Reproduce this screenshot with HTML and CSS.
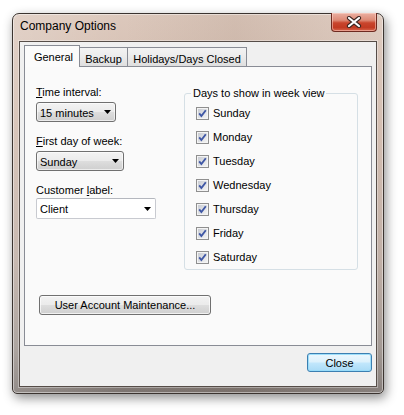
FILE: index.html
```html
<!DOCTYPE html>
<html>
<head>
<meta charset="utf-8">
<link rel="stylesheet" href="styles.css">
</head>
<body>
<div class="window">
  <div class="titlebar">
    <span class="title">Company Options</span>
    <div class="caption-close">
      <svg width="16" height="12" viewBox="0 0 16 12">
        <path d="M3 2 L13 10 M13 2 L3 10" stroke="#3b2520" stroke-width="4.2" stroke-linecap="round" fill="none"/>
        <path d="M3 2 L13 10 M13 2 L3 10" stroke="#ffffff" stroke-width="2.2" stroke-linecap="round" fill="none"/>
      </svg>
    </div>
  </div>
  <div class="client">
    <div class="tabs">
      <div class="tab tab-general active">General</div>
      <div class="tab tab-backup">Backup</div>
      <div class="tab tab-holidays">Holidays/Days Closed</div>
    </div>
    <div class="panel">
      <div class="panel-top">
        <div class="left-col">
          <div class="field-label first"><u>T</u>ime interval:</div>
          <div class="combo w80"><span>15 minutes</span><svg class="arrow" width="7" height="4" viewBox="0 0 7 4"><polygon points="0,0 7,0 3.5,4" fill="#000"/></svg></div>
          <div class="field-label"><u>F</u>irst day of week:</div>
          <div class="combo w88"><span>Sunday</span><svg class="arrow" width="7" height="4" viewBox="0 0 7 4"><polygon points="0,0 7,0 3.5,4" fill="#000"/></svg></div>
          <div class="field-label">Customer <u>l</u>abel:</div>
          <div class="combo edit w120"><span>Client</span><svg class="arrow" width="7" height="4" viewBox="0 0 7 4"><polygon points="0,0 7,0 3.5,4" fill="#000"/></svg></div>
        </div>
        <fieldset class="group">
          <legend>Days to show in week view</legend>
          <div class="day first"><svg class="check" width="13" height="13" viewBox="0 0 13 13"><rect x="0.5" y="0.5" width="12" height="12" fill="#f4f4f4" stroke="#8f8f8f"/><rect x="2" y="2" width="9" height="9" fill="url(#cb)"/><path d="M3.2 6.3 L5.4 9 L9.8 3.2" stroke="#3f57a5" stroke-width="1.9" fill="none"/><defs><linearGradient id="cb" x1="0" y1="0" x2="1" y2="1"><stop offset="0" stop-color="#c9ccd3"/><stop offset="1" stop-color="#f3f3f3"/></linearGradient></defs></svg><span>Sunday</span></div>
          <div class="day"><svg class="check" width="13" height="13" viewBox="0 0 13 13"><rect x="0.5" y="0.5" width="12" height="12" fill="#f4f4f4" stroke="#8f8f8f"/><rect x="2" y="2" width="9" height="9" fill="url(#cb)"/><path d="M3.2 6.3 L5.4 9 L9.8 3.2" stroke="#3f57a5" stroke-width="1.9" fill="none"/></svg><span>Monday</span></div>
          <div class="day"><svg class="check" width="13" height="13" viewBox="0 0 13 13"><rect x="0.5" y="0.5" width="12" height="12" fill="#f4f4f4" stroke="#8f8f8f"/><rect x="2" y="2" width="9" height="9" fill="url(#cb)"/><path d="M3.2 6.3 L5.4 9 L9.8 3.2" stroke="#3f57a5" stroke-width="1.9" fill="none"/></svg><span>Tuesday</span></div>
          <div class="day"><svg class="check" width="13" height="13" viewBox="0 0 13 13"><rect x="0.5" y="0.5" width="12" height="12" fill="#f4f4f4" stroke="#8f8f8f"/><rect x="2" y="2" width="9" height="9" fill="url(#cb)"/><path d="M3.2 6.3 L5.4 9 L9.8 3.2" stroke="#3f57a5" stroke-width="1.9" fill="none"/></svg><span>Wednesday</span></div>
          <div class="day"><svg class="check" width="13" height="13" viewBox="0 0 13 13"><rect x="0.5" y="0.5" width="12" height="12" fill="#f4f4f4" stroke="#8f8f8f"/><rect x="2" y="2" width="9" height="9" fill="url(#cb)"/><path d="M3.2 6.3 L5.4 9 L9.8 3.2" stroke="#3f57a5" stroke-width="1.9" fill="none"/></svg><span>Thursday</span></div>
          <div class="day"><svg class="check" width="13" height="13" viewBox="0 0 13 13"><rect x="0.5" y="0.5" width="12" height="12" fill="#f4f4f4" stroke="#8f8f8f"/><rect x="2" y="2" width="9" height="9" fill="url(#cb)"/><path d="M3.2 6.3 L5.4 9 L9.8 3.2" stroke="#3f57a5" stroke-width="1.9" fill="none"/></svg><span>Friday</span></div>
          <div class="day"><svg class="check" width="13" height="13" viewBox="0 0 13 13"><rect x="0.5" y="0.5" width="12" height="12" fill="#f4f4f4" stroke="#8f8f8f"/><rect x="2" y="2" width="9" height="9" fill="url(#cb)"/><path d="M3.2 6.3 L5.4 9 L9.8 3.2" stroke="#3f57a5" stroke-width="1.9" fill="none"/></svg><span>Saturday</span></div>
        </fieldset>
      </div>
      <button class="btn uam">User Account Maintenance...</button>
    </div>
    <div class="footer">
      <button class="btn default close">Close</button>
    </div>
  </div>
</div>
</body>
</html>
```
FILE: styles.css
```css
* { box-sizing: border-box; }
html, body { margin: 0; padding: 0; background: #ffffff; }
body {
  width: 404px;
  height: 415px;
  overflow: hidden;
  font-family: "Liberation Sans", Arial, sans-serif;
  font-size: 11px;
  color: #000;
}
.window {
  margin: 13px 0 0 12px;
  width: 372px;
  height: 381px;
  border: 1px solid #3b3430;
  border-radius: 7px 7px 5px 5px;
  padding: 0 6px 6px;
  display: flex;
  flex-direction: column;
  background:
    linear-gradient(90deg, rgba(255,255,255,0.18) 0%, rgba(255,255,255,0) 30%, rgba(90,60,40,0.08) 60%, rgba(255,255,255,0.08) 100%),
    linear-gradient(180deg, #dcc8bc 0%, #d0b9ab 30%, #bcaaa0 65%, #9c928c 88%, #7c7470 100%);
  box-shadow: 2px 4px 11px rgba(0,0,0,0.45), inset 0 0 0 1px rgba(255,255,255,0.45);
}
.titlebar {
  height: 27px;
  display: flex;
  justify-content: space-between;
  align-items: flex-start;
}
.title {
  font-size: 12px;
  line-height: 14px;
  padding: 5px 0 0 1px;
  color: #000;
}
.caption-close {
  width: 46px;
  height: 19px;
  margin: -1px 0 0 0;
  border: 1px solid #6e2a20;
  border-top: none;
  border-radius: 0 0 4px 4px;
  background: linear-gradient(180deg, #eab0a2 0%, #de8a76 40%, #c9452d 55%, #c23a22 80%, #d8654c 100%);
  box-shadow: inset 0 0 0 1px rgba(255,220,210,0.5);
  display: flex;
  align-items: center;
  justify-content: center;
}
.client {
  flex: 1;
  border: 1px solid #564d48;
  box-shadow: 0 0 0 1px rgba(255,255,255,0.35);
  background: #f0f0f0;
  padding: 3px 4px 0;
  display: flex;
  flex-direction: column;
}
.tabs {
  height: 21px;
  display: flex;
  align-items: flex-end;
  position: relative;
  z-index: 1;
}
.tab {
  height: 19px;
  border: 1px solid #898c95;
  border-bottom: none;
  padding-top: 4px;
  line-height: 14px;
  text-align: center;
  margin-left: -1px;
  background: linear-gradient(180deg, #f3f3f3 0%, #ebebeb 50%, #dedede 100%);
}
.tab.active {
  height: 22px;
  margin-left: 0;
  margin-bottom: -1px;
  background: #fbfbfb;
  position: relative;
  z-index: 2;
}
.tab-general { width: 56px; padding-left: 3px; }
.tab-backup { width: 49px; }
.tab-holidays { width: 120px; }
.panel {
  height: 280px;
  border: 1px solid #898c95;
  background: #fafafa;
  padding: 0 0 0 11px;
  display: flex;
  flex-direction: column;
  align-items: flex-start;
}
.panel-top {
  display: flex;
  align-items: flex-start;
}
.left-col {
  width: 148px;
  display: flex;
  flex-direction: column;
  align-items: flex-start;
}
.field-label {
  line-height: 14px;
  margin-top: 12px;
  margin-bottom: 3px;
}
.field-label.first { margin-top: 18px; }
.combo {
  height: 20px;
  border: 1px solid #707070;
  border-radius: 3px;
  background: linear-gradient(180deg, #f3f3f3 0%, #ebebeb 48%, #dddddd 52%, #cfcfcf 100%);
  box-shadow: inset 0 0 0 1px rgba(255,255,255,0.6);
  display: flex;
  align-items: center;
  justify-content: space-between;
  padding: 1px 4px 0 3px;
  line-height: 14px;
}
.combo .arrow { margin-bottom: 1px; }
.combo.edit {
  height: 21px;
  margin-top: -2px;
  background: #ffffff;
  border: 1px solid #c8cad0;
  border-top-color: #b4b7be;
  border-radius: 2px;
  box-shadow: none;
}
.w80 { width: 80px; }
.w88 { width: 88px; }
.w120 { width: 120px; }
.group {
  margin: 19px 0 0 0;
  width: 174px;
  min-width: 0;
  border: 1px solid #d5dfe5;
  border-radius: 3px;
  padding: 0 0 0 11px;
}
.group legend {
  padding: 0 2px;
  margin-left: -5px;
  line-height: 14px;
}
.day {
  height: 24px;
  line-height: 14px;
  display: flex;
  align-items: center;
}
.day.first { margin-top: 1px; }
.check { margin-right: 4px; flex: none; }
.btn {
  font-family: "Liberation Sans", Arial, sans-serif;
  font-size: 11px;
  color: #000;
  line-height: 14px;
  padding: 0;
  border: 1px solid #707070;
  border-radius: 3px;
  background: linear-gradient(180deg, #f2f2f2 0%, #ebebeb 48%, #dddddd 52%, #cfcfcf 100%);
  box-shadow: inset 0 0 0 1px rgba(255,255,255,0.7);
}
.uam {
  width: 172px;
  height: 20px;
  margin: 25px 0 0 3px;
}
.footer {
  display: flex;
  justify-content: flex-end;
  padding-top: 7px;
}
.btn.default {
  width: 65px;
  height: 19px;
  border-color: #3c7fb1;
  background: linear-gradient(180deg, #ecf7fd 0%, #dcf1fc 48%, #c2e7fc 52%, #a9dbf6 100%);
  box-shadow: inset 0 0 0 1px rgba(150,220,250,0.9);
}
```
